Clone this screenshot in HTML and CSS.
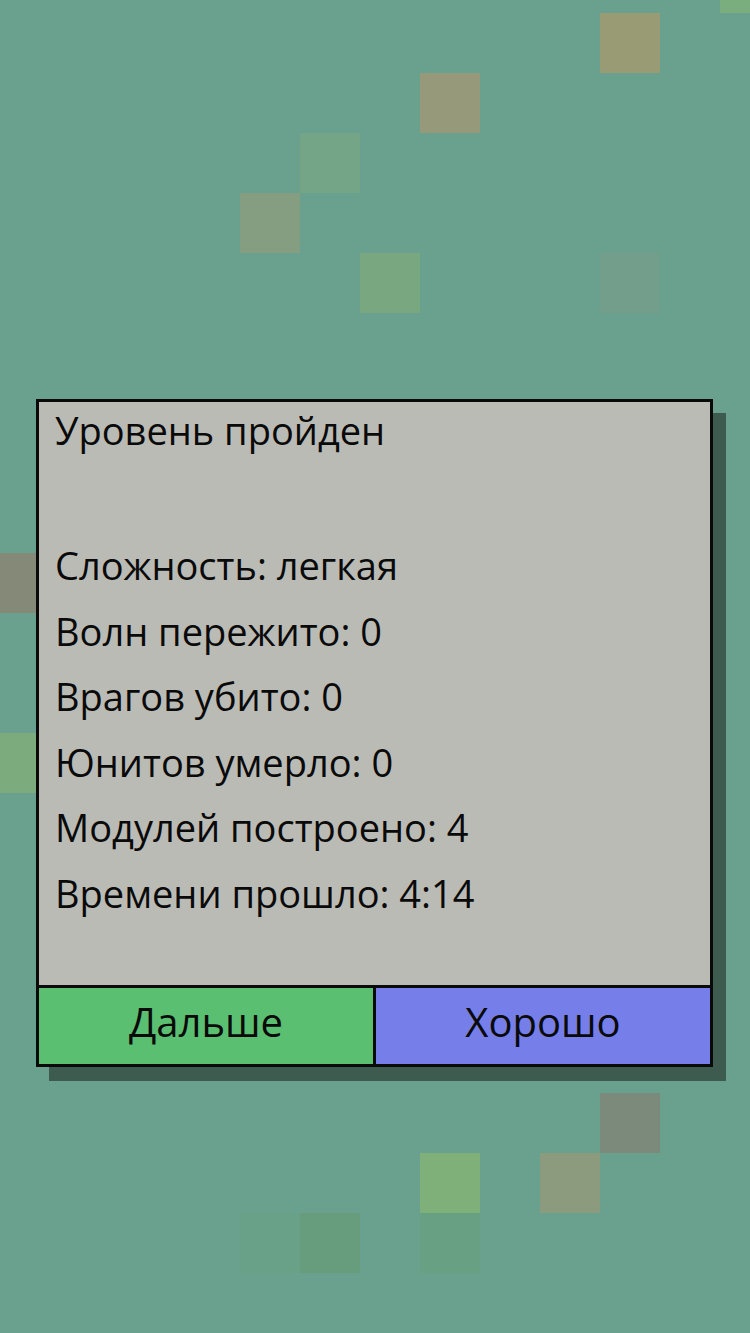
FILE: index.html
```html
<!DOCTYPE html>
<html lang="ru">
<head>
    <meta charset="UTF-8">
    <meta name="viewport" content="width=device-width, initial-scale=1.0">
    <title>Уровень пройден</title>
    <link rel="stylesheet" href="styles.css">
</head>
<body>
    <!-- фон: сетка клеток 60x60 -->
    <div class="field">
        <span class="tile" style="grid-area: 1 / 13; background: #7aae7e"></span>
        <span class="tile" style="grid-area: 2 / 11; background: #999b75"></span>
        <span class="tile" style="grid-area: 3 / 8; background: #979a7a"></span>
        <span class="tile" style="grid-area: 4 / 6; background: #74a586"></span>
        <span class="tile" style="grid-area: 5 / 5; background: #859d80"></span>
        <span class="tile" style="grid-area: 6 / 7; background: #79a780"></span>
        <span class="tile" style="grid-area: 6 / 11; background: #739e8c"></span>
        <span class="tile" style="grid-area: 11 / 1; background: #858a78"></span>
        <span class="tile" style="grid-area: 14 / 1; background: #7cab7d"></span>
        <span class="tile" style="grid-area: 20 / 11; background: #7b8a7b"></span>
        <span class="tile" style="grid-area: 21 / 8; background: #80b07a"></span>
        <span class="tile" style="grid-area: 21 / 10; background: #8c9b7d"></span>
        <span class="tile" style="grid-area: 22 / 5; background: #68a088"></span>
        <span class="tile" style="grid-area: 22 / 6; background: #679d7c"></span>
        <span class="tile" style="grid-area: 22 / 8; background: #68a084"></span>
    </div>

    <!-- окно итогов уровня -->
    <div class="dialog">
        <div class="stats">
            <p class="line">Уровень пройден</p>
            <p class="line"></p>
            <p class="line">Сложность: легкая</p>
            <p class="line">Волн пережито: 0</p>
            <p class="line">Врагов убито: 0</p>
            <p class="line">Юнитов умерло: 0</p>
            <p class="line">Модулей построено: 4</p>
            <p class="line">Времени прошло: 4:14</p>
        </div>
        <div class="buttons">
            <a class="btn btn-next" href="javascript:;"><span>Дальше</span></a>
            <a class="btn btn-ok" href="javascript:;"><span>Хорошо</span></a>
        </div>
    </div>
</body>
</html>
```

FILE: styles.css
```css
*{
    margin: 0;
    padding: 0;
    box-sizing: border-box;
}
html, body{
    width: 750px;
    height: 1333px;
    overflow: hidden;
}
body{
    background-color: #69a18e;
    font-family: "Open Sans", "Noto Sans", sans-serif;
    color: #0a0a0a;
    position: relative;
}

/* клетки фона, сетка сдвинута вверх на 47px */
.field{
    position: absolute;
    left: 0;
    top: -47px;
    display: grid;
    grid-template-columns: repeat(13, 60px);
    grid-auto-rows: 60px;
}

/* окно */
.dialog{
    position: relative;
    width: 677px;
    margin: 399px 0 0 36px;
    background-color: #bbbbb6;
    border: 3px solid #0a0a0a;
    box-shadow: 13px 14px 0 #3d5b4f;
}
.stats{
    /* flow-root, чтобы отступ первой строки не выталкивал блок */
    display: flow-root;
    height: 583px;
    padding: 0 0 0 16px;
}
.line{
    height: 65.5px;
    line-height: 65.5px;
    font-size: 38px;
}
/* первая строка чуть выше */
.line:first-child{
    margin-top: -4px;
    margin-bottom: 4px;
}

.buttons{
    display: flex;
    border-top: 3px solid #0a0a0a;
    height: 79px;
}
.btn{
    flex: 1;
    display: flex;
    align-items: center;
    justify-content: center;
    padding-bottom: 9px;
    color: #0a0a0a;
    text-decoration: none;
    font-size: 40px;
}
.btn span{
    display: inline-block;
}
.btn-next{
    background-color: #5bbf72;
    border-right: 3px solid #0a0a0a;
}
.btn-ok{
    background-color: #767fe9;
}
```
